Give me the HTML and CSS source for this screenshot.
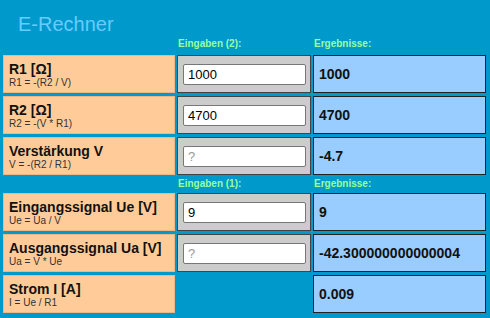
FILE: index.html
```html
<!DOCTYPE html>
<html lang="de">
<head>
  <meta charset="UTF-8" />
  <meta name="viewport" content="width=device-width, initial-scale=1.0"/>
  <title>E-Rechner</title>
  <link rel="stylesheet" href="styles.css">
</head>
<body>
  <h1 class="titel">E-Rechner</h1>

  <div class="rechner">
    <div></div>
    <div class="kopf kopf-erste">Eingaben (2):</div>
    <div class="kopf kopf-erste">Ergebnisse:</div>

    <div class="label">
      <strong>R1 [&Omega;]</strong>
      <small>R1 = -(R2 / V)</small>
    </div>
    <div class="eingabe"><input type="text" value="1000" placeholder="?" /></div>
    <div class="ergebnis">1000</div>

    <div class="label">
      <strong>R2 [&Omega;]</strong>
      <small>R2 = -(V * R1)</small>
    </div>
    <div class="eingabe"><input type="text" value="4700" placeholder="?" /></div>
    <div class="ergebnis">4700</div>

    <div class="label">
      <strong>Verstärkung V</strong>
      <small>V = -(R2 / R1)</small>
    </div>
    <div class="eingabe"><input type="text" placeholder="?" /></div>
    <div class="ergebnis">-4.7</div>

    <div></div>
    <div class="kopf">Eingaben (1):</div>
    <div class="kopf">Ergebnisse:</div>

    <div class="label">
      <strong>Eingangssignal Ue [V]</strong>
      <small>Ue = Ua / V</small>
    </div>
    <div class="eingabe"><input type="text" value="9" placeholder="?" /></div>
    <div class="ergebnis">9</div>

    <div class="label">
      <strong>Ausgangssignal Ua [V]</strong>
      <small>Ua = V * Ue</small>
    </div>
    <div class="eingabe"><input type="text" placeholder="?" /></div>
    <div class="ergebnis">-42.300000000000004</div>

    <div class="label">
      <strong>Strom I [A]</strong>
      <small>I = Ue / R1</small>
    </div>
    <div class="ergebnis ohne-eingabe">0.009</div>
  </div>
</body>
</html>
```

FILE: styles.css
```css
* {
  box-sizing: border-box;
  font-family: 'Liberation Sans', Arial, sans-serif;
}

body {
  margin: 0;
  height: 100vh;
  background-color: #0099cc;
  overflow: hidden;
}

.titel {
  margin: 0;
  padding: 13px 0 0 18px;
  height: 36px;
  font-size: 20px;
  font-weight: normal;
  line-height: 23px;
  color: #66ccff;
}

.rechner {
  display: grid;
  grid-template-columns: 172px 134px 173px;
  gap: 3px 2px;
  padding-left: 3px;
}

.kopf {
  height: 12px;
  font-size: 10px;
  font-weight: bold;
  line-height: 12px;
  color: #99ff99;
  padding-left: 1px;
}

.kopf-erste {
  height: 16px;
  padding-top: 2px;
}

.label {
  height: 38px;
  padding: 6px 5px 0;
  background-color: #ffcc99;
  border: 1px solid #e8b888;
}

.label strong {
  display: block;
  font-size: 14px;
  line-height: 15px;
  color: #111;
}

.label small {
  display: block;
  font-size: 10px;
  line-height: 11px;
  color: #333;
}

.eingabe {
  height: 38px;
  display: flex;
  align-items: center;
  padding: 0 4px 0 5px;
  background-color: #cccccc;
  border: 1px solid #444;
}

.eingabe input {
  width: 100%;
  height: 21px;
  margin: 1px 0 0;
  padding: 0 4px;
  font-size: 13px;
  color: #000;
  background: white;
  border: 1px solid #777;
  border-radius: 2px;
}

.eingabe input::placeholder {
  color: #999;
}

.ergebnis {
  height: 38px;
  display: flex;
  align-items: center;
  padding: 0 5px;
  font-size: 14px;
  font-weight: bold;
  color: #111;
  background-color: #99ccff;
  border: 1px solid #222;
}

.ohne-eingabe {
  grid-column: 3;
}
```
